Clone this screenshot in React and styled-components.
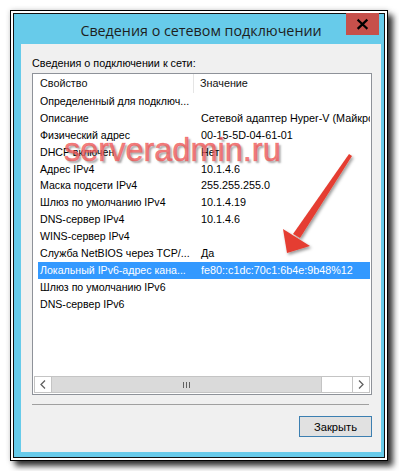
import React from "react";
import styled, { createGlobalStyle } from "styled-components";

const GlobalStyle = createGlobalStyle`
  html, body {
    margin: 0;
    padding: 0;
    background: #ffffff;
  }
  body {
    font-family: "Liberation Sans", Arial, sans-serif;
    color: #000;
  }
`;

const Stage = styled("div")({
  position: "relative",
  width: "399px",
  height: "471px",
  overflow: "hidden",
  padding: "10px 0 0 10px",
  boxSizing: "border-box",
});

const Window = styled("div")({
  width: "378px",
  height: "451px",
  boxSizing: "border-box",
  border: "1px solid #000",
  padding: "2px",
  background: "#fff",
  boxShadow: "5px 5px 6px rgba(0,0,0,0.8), 0 0 5px rgba(0,0,0,0.18)",
});

const Frame = styled("div")({
  height: "100%",
  boxSizing: "border-box",
  border: "1px solid #111",
  background: "#67cbea",
  padding: "0 3px 5px 7px",
  display: "flex",
  flexDirection: "column",
});

const TitleBar = styled("div")({
  height: "30px",
  flexShrink: 0,
  display: "flex",
  alignItems: "flex-start",
});

const TitleText = styled("div")({
  flex: 1,
  height: "30px",
  lineHeight: "33px",
  paddingLeft: "35px",
  textAlign: "center",
  whiteSpace: "nowrap",
  fontFamily: '"Open Sans", "Liberation Sans", sans-serif',
  fontSize: "14.3px",
  color: "#1e1e1e",
});

const CloseButton = styled("div")({
  width: "33px",
  height: "22px",
  marginTop: "-1px",
  marginRight: "2px",
  display: "block",
  flexShrink: 0,
});

const Panel = styled("div")({
  height: "408px",
  background: "#f0f0f0",
  padding: "12px 9px 0 11px",
  boxSizing: "border-box",
  display: "flex",
  flexDirection: "column",
  fontSize: "10.8px",
});

const Label = styled("div")({
  height: "15px",
  lineHeight: "15px",
  marginBottom: "2px",
});

const ListView = styled("div")({
  height: "322px",
  boxSizing: "border-box",
  border: "1px solid #8e9299",
  background: "#fff",
  display: "flex",
  flexDirection: "column",
  overflow: "hidden",
});

const Header = styled("div")({
  display: "grid",
  gridTemplateColumns: "161px 1fr",
  height: "19px",
  flexShrink: 0,
  lineHeight: "19px",
});

const HeaderCell = styled("div")(({ first }) => ({
  paddingLeft: first ? "7px" : "6px",
  borderRight: first ? "1px solid #e5e5e5" : "none",
  whiteSpace: "nowrap",
  color: "#111",
}));

const Rows = styled("div")({
  flex: 1,
  display: "flex",
  flexDirection: "column",
});

const Row = styled("div")(({ selected }) => ({
  display: "grid",
  gridTemplateColumns: "156px 1fr",
  height: "16.9px",
  lineHeight: "16.9px",
  margin: "0 1px 0 5px",
  background: selected ? "#3399ff" : "transparent",
  color: selected ? "#fff" : "#000",
}));

const Cell = styled("div")(({ first }) => ({
  paddingLeft: first ? "2px" : "7px",
  fontSize: first ? "10.6px" : "10.8px",
  whiteSpace: "nowrap",
  overflow: "hidden",
}));

const Scrollbar = styled("div")({
  height: "17px",
  flexShrink: 0,
  boxSizing: "border-box",
  margin: "0 1px 1px 1px",
  border: "1px solid #c4c4c4",
  display: "flex",
});

const ArrowButton = styled("div")(({ side }) => ({
  width: "17px",
  boxSizing: "border-box",
  display: "flex",
  alignItems: "center",
  justifyContent: "center",
  borderRight: side === "left" ? "1px solid #c4c4c4" : "none",
  borderLeft: side === "right" ? "1px solid #c4c4c4" : "none",
}));

const Thumb = styled("div")({
  width: "270px",
  boxSizing: "border-box",
  background: "#dadada",
  borderRight: "1px solid #c4c4c4",
  display: "flex",
  alignItems: "center",
  justifyContent: "center",
  gap: "2px",
});

const Grip = styled("span")({
  width: "1px",
  height: "6px",
  background: "#606060",
});

const Track = styled("div")({
  flex: 1,
  background: "#fff",
});

const Divider = styled("div")({
  height: "1px",
  background: "#a0a0a0",
  marginTop: "9px",
  marginRight: "3px",
});

const Footer = styled("div")({
  display: "flex",
  justifyContent: "flex-end",
  marginTop: "11px",
});

const Button = styled("div")({
  width: "73px",
  height: "21px",
  boxSizing: "border-box",
  border: "1px solid #3c7fb1",
  background: "#e1e1e1",
  display: "flex",
  alignItems: "center",
  justifyContent: "center",
  fontSize: "11.2px",
});

const Watermark = styled("div")({
  position: "absolute",
  left: "64px",
  top: "133px",
  fontSize: "32.5px",
  lineHeight: "34px",
  fontFamily: '"Liberation Sans", Arial, sans-serif',
  color: "rgba(242, 92, 92, 0.8)",
  WebkitTextStroke: "0.6px rgba(236, 80, 80, 0.6)",
  textShadow: "2px 2px 2px rgba(60,60,60,0.45)",
  whiteSpace: "nowrap",
  pointerEvents: "none",
});

const Overlay = styled("svg")({
  position: "absolute",
  left: 0,
  top: 0,
  pointerEvents: "none",
});

const rows = [
  ["Определенный для подключ...", ""],
  ["Описание", "Сетевой адаптер Hyper-V (Майкрософт)"],
  ["Физический адрес", "00-15-5D-04-61-01"],
  ["DHCP включен", "Нет"],
  ["Адрес IPv4", "10.1.4.6"],
  ["Маска подсети IPv4", "255.255.255.0"],
  ["Шлюз по умолчанию IPv4", "10.1.4.19"],
  ["DNS-сервер IPv4", "10.1.4.6"],
  ["WINS-сервер IPv4", ""],
  ["Служба NetBIOS через TCP/...", "Да"],
  ["Локальный IPv6-адрес кана...", "fe80::c1dc:70c1:6b4e:9b48%12"],
  ["Шлюз по умолчанию IPv6", ""],
  ["DNS-сервер IPv6", ""],
];

const Chevron = ({ dir }) => (
  <svg width="6" height="9" viewBox="0 0 6 9">
    <polyline
      points={dir === "left" ? "5,0.5 1,4.5 5,8.5" : "1,0.5 5,4.5 1,8.5"}
      fill="none"
      stroke="#606060"
      strokeWidth="1.3"
    />
  </svg>
);

export default function App() {
  return (
    <>
      <GlobalStyle />
      <Stage>
        <Window>
          <Frame>
            <TitleBar>
              <TitleText>Сведения о сетевом подключении</TitleText>
              <CloseButton as="svg" viewBox="0 0 33 22">
                <rect x="0" y="0" width="33" height="22" fill="#c7504b" />
                <path
                  d="M12.5 7.5 L20.5 15 M20.5 7.5 L12.5 15"
                  stroke="#000"
                  strokeWidth="2.3"
                  strokeLinecap="square"
                />
              </CloseButton>
            </TitleBar>
            <Panel>
              <Label>Сведения о подключении к сети:</Label>
              <ListView>
                <Header>
                  <HeaderCell first>Свойство</HeaderCell>
                  <HeaderCell>Значение</HeaderCell>
                </Header>
                <Rows>
                  {rows.map(([name, value], i) => (
                    <Row key={i} selected={i === 10}>
                      <Cell first>{name}</Cell>
                      <Cell>{value}</Cell>
                    </Row>
                  ))}
                </Rows>
                <Scrollbar>
                  <ArrowButton side="left">
                    <Chevron dir="left" />
                  </ArrowButton>
                  <Thumb>
                    <Grip />
                    <Grip />
                    <Grip />
                  </Thumb>
                  <Track />
                  <ArrowButton side="right">
                    <Chevron dir="right" />
                  </ArrowButton>
                </Scrollbar>
              </ListView>
              <Divider />
              <Footer>
                <Button>Закрыть</Button>
              </Footer>
            </Panel>
          </Frame>
        </Window>
        <Watermark>serveradmin.ru</Watermark>
        <Overlay width="399" height="471" viewBox="0 0 399 471">
          <defs>
            <filter id="arrowShadow" x="-20%" y="-20%" width="140%" height="140%">
              <feDropShadow dx="1.5" dy="2" stdDeviation="1.5" floodColor="#000" floodOpacity="0.4" />
            </filter>
          </defs>
          <g filter="url(#arrowShadow)" fill="#e53d30">
            <polygon points="349,154 352,156 300,238 293,234" />
            <polygon points="287,253 283,229 310,246" />
          </g>
        </Overlay>
      </Stage>
    </>
  );
}
